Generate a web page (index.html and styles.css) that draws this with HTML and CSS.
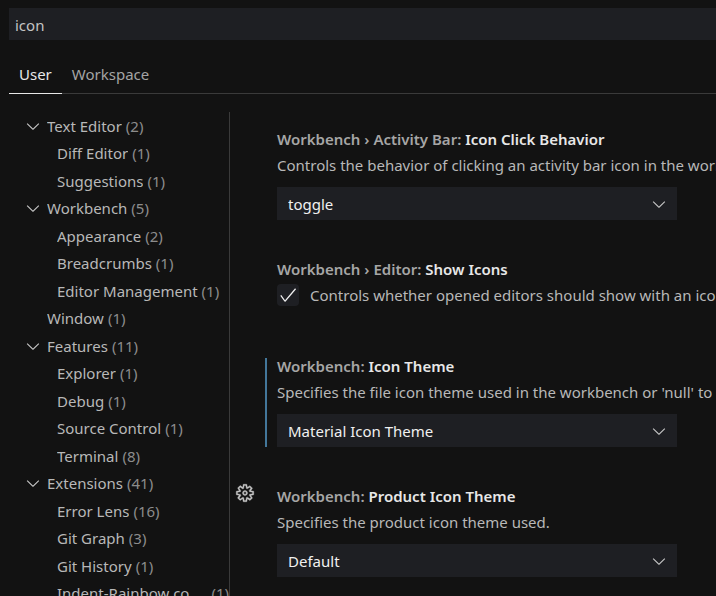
FILE: index.html
```html
<!DOCTYPE html>
<html lang="en">
<head>
<meta charset="utf-8">
<title>Settings</title>
<link rel="stylesheet" href="styles.css">
</head>
<body>
<svg class="sprite" aria-hidden="true">
  <symbol id="chevron" viewBox="0 0 16 16"><path d="M7.976 10.072l4.357-4.357.62.618L8.284 11h-.618L3 6.333l.619-.618 4.357 4.357z"/></symbol>
  <symbol id="check" viewBox="0 0 16 16"><path d="M14.431 3.323l-8.47 10-.79-.036-3.35-4.77.818-.574 2.978 4.24 8.051-9.506.764.646z"/></symbol>
  <symbol id="gear" viewBox="0 0 16 16"><path fill-rule="evenodd" d="M9.1 4.4L8.6 2H7.4l-.5 2.4-.7.3-2-1.3-.9.8 1.3 2-.2.7-2.4.5v1.2l2.4.5.3.8-1.3 2 .8.8 2-1.3.8.3.4 2.3h1.2l.5-2.4.8-.3 2 1.3.8-.8-1.3-2 .3-.8 2.3-.4V7.4l-2.4-.5-.3-.8 1.3-2-.8-.8-2 1.3-.7-.2zM9.4 1l.5 2.4L12 2.1l2 2-1.4 2.1 2.4.4v2.8l-2.4.5L14 12l-2 2-2.1-1.4-.5 2.4H6.6l-.5-2.4L4 13.9l-2-2 1.4-2.1L1 9.4V6.6l2.4-.5L2.1 4l2-2 2.1 1.4.4-2.4h2.8zm.6 7c0 1.1-.9 2-2 2s-2-.9-2-2 .9-2 2-2 2 .9 2 2zM8 9c.6 0 1-.4 1-1s-.4-1-1-1-1 .4-1 1 .4 1 1 1z"/></symbol>
</svg>
<div class="editor">
  <input class="search" type="text" value="icon" aria-label="Search settings">
  <div class="tabs" role="tablist">
    <button class="tab active" role="tab" aria-selected="true">User</button>
    <button class="tab" role="tab" aria-selected="false">Workspace</button>
  </div>
  <div class="body">
    <ul class="toc">
      <li class="group"><svg class="icon"><use href="#chevron"/></svg><span class="name">Text Editor</span><span class="count">(2)</span></li>
      <li class="child"><span class="name">Diff Editor</span><span class="count">(1)</span></li>
      <li class="child"><span class="name">Suggestions</span><span class="count">(1)</span></li>
      <li class="group"><svg class="icon"><use href="#chevron"/></svg><span class="name">Workbench</span><span class="count">(5)</span></li>
      <li class="child"><span class="name">Appearance</span><span class="count">(2)</span></li>
      <li class="child"><span class="name">Breadcrumbs</span><span class="count">(1)</span></li>
      <li class="child"><span class="name">Editor Management</span><span class="count">(1)</span></li>
      <li class="leaf"><span class="name">Window</span><span class="count">(1)</span></li>
      <li class="group"><svg class="icon"><use href="#chevron"/></svg><span class="name">Features</span><span class="count">(11)</span></li>
      <li class="child"><span class="name">Explorer</span><span class="count">(1)</span></li>
      <li class="child"><span class="name">Debug</span><span class="count">(1)</span></li>
      <li class="child"><span class="name">Source Control</span><span class="count">(1)</span></li>
      <li class="child"><span class="name">Terminal</span><span class="count">(8)</span></li>
      <li class="group"><svg class="icon"><use href="#chevron"/></svg><span class="name">Extensions</span><span class="count">(41)</span></li>
      <li class="child"><span class="name">Error Lens</span><span class="count">(16)</span></li>
      <li class="child"><span class="name">Git Graph</span><span class="count">(3)</span></li>
      <li class="child"><span class="name">Git History</span><span class="count">(1)</span></li>
      <li class="child"><span class="name">Indent-Rainbow configuration</span><span class="count">(1)</span></li>
    </ul>
    <main class="settings">
      <section class="setting">
        <div class="content">
          <label class="title" for="click">Workbench › Activity Bar: <b>Icon Click Behavior</b></label>
          <p class="desc">Controls the behavior of clicking an activity bar icon in the workbench.</p>
          <div class="select"><select id="click"><option>toggle</option></select><svg class="icon"><use href="#chevron"/></svg></div>
        </div>
      </section>
      <section class="setting toggle">
        <div class="content">
          <div class="title">Workbench › Editor: <b>Show Icons</b></div>
          <div class="check-row">
            <span class="checkbox"><input id="show" type="checkbox" checked><svg class="icon"><use href="#check"/></svg></span>
            <label class="desc" for="show">Controls whether opened editors should show with an icon or not.</label>
          </div>
        </div>
      </section>
      <section class="setting modified">
        <div class="content">
          <label class="title" for="theme">Workbench: <b>Icon Theme</b></label>
          <p class="desc">Specifies the file icon theme used in the workbench or 'null' to not show any file icons.</p>
          <div class="select"><select id="theme"><option>Material Icon Theme</option></select><svg class="icon"><use href="#chevron"/></svg></div>
        </div>
      </section>
      <section class="setting">
        <button class="gear" aria-label="More actions"><svg class="icon"><use href="#gear"/></svg></button>
        <div class="content">
          <label class="title" for="product">Workbench: <b>Product Icon Theme</b></label>
          <p class="desc">Specifies the product icon theme used.</p>
          <div class="select"><select id="product"><option>Default</option></select><svg class="icon"><use href="#chevron"/></svg></div>
        </div>
      </section>
    </main>
  </div>
</div>
</body>
</html>
```
FILE: styles.css
```css
* { box-sizing: border-box; }

body {
  margin: 0;
  background: #121212;
  color: #b8b8b8;
  font: 15px/24px "Noto Sans", "Open Sans", sans-serif;
}

button, input, select { font: inherit; color: inherit; border: 0; margin: 0; border-radius: 0; }
button { background: none; padding: 0; }

.sprite { display: none; }
.icon { width: 20px; height: 20px; fill: #c5c5c5; flex: none; }

.editor {
  height: 100vh;
  overflow: hidden;
  padding: 8px 0 0 9px;
  display: flex;
  flex-direction: column;
}

.search {
  flex: none;
  width: 100%;
  height: 32px;
  padding: 2px 6px 0;
  background: #1e1f23;
  color: #c4c4c4;
  outline: 0;
}

.tabs {
  flex: none;
  display: flex;
  height: 38px;
  margin-top: 16px;
  border-bottom: 1px solid #3a3a3a;
}
.tab { height: 38px; padding: 0 10px 2px; color: #a4a4a4; border-bottom: 1px solid transparent; }
.tab.active { color: #e7e7e7; border-bottom-color: #e7e7e7; }

.body { flex: 1; min-height: 0; display: flex; margin-top: 18px; }

.toc {
  flex: none;
  width: 221px;
  margin: 0;
  padding: 0 0 0 14px;
  list-style: none;
  overflow: hidden;
  border-right: 1px solid #3a3a3a;
}
.toc li { display: flex; align-items: center; gap: 4px; height: 28px; white-space: nowrap; }
.toc li:nth-child(odd) { height: 27px; }
.toc .leaf { padding-left: 24px; }
.toc .child { padding-left: 34px; }
.name { overflow: hidden; text-overflow: ellipsis; }
.count { color: #8c8c8c; }

.settings { flex: 1; min-width: 0; overflow: hidden; padding: 19px 0 0 35px; }
.setting { position: relative; margin-bottom: 41px; }
.toggle { margin-bottom: 50px; }
.content { padding-left: 10px; border-left: 2px solid transparent; }
.modified .content { border-left-color: #43779a; }
.title { display: block; line-height: 16px; font-weight: 600; color: #a6a6a6; white-space: nowrap; }
.title b { font-weight: 600; color: #e7e7e7; }
.desc { margin: 6px 0 10px; white-space: nowrap; }

.select { display: grid; align-items: center; max-width: 400px; height: 33px; }
.select > * { grid-area: 1 / 1; }
.select select {
  appearance: none;
  width: 100%;
  height: 100%;
  padding: 0 36px 0 11px;
  background: #1e1f23;
  color: #f0f0f0;
}
.select .icon { justify-self: end; margin-right: 8px; pointer-events: none; }

.check-row { display: flex; align-items: center; gap: 11px; margin-top: 6px; margin-bottom: 51px; }
.check-row .desc { margin: 0; }
.toggle { margin-bottom: 0; }
.checkbox { display: grid; place-items: center; flex: none; }
.checkbox > * { grid-area: 1 / 1; }
.checkbox input { appearance: none; width: 22px; height: 22px; background: #1e1f23; border-radius: 4px; }
.checkbox .icon { fill: #f0f0f0; pointer-events: none; }

.gear { position: absolute; left: -30px; top: -5px; width: 20px; height: 20px; display: flex; }
.gear .icon { stroke: #c5c5c5; stroke-width: 0.3; }
```
